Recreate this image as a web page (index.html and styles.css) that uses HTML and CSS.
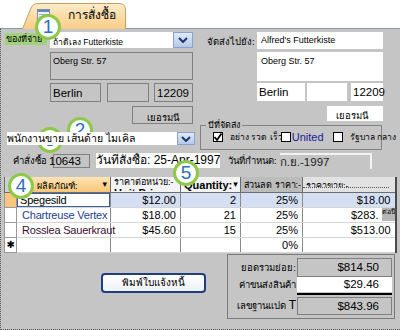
FILE: index.html
```html
<!DOCTYPE html>
<html lang="th">
<head>
    <meta charset="UTF-8">
    <meta name="viewport" content="width=device-width, initial-scale=1.0">
    <title>การสั่งซื้อ</title>
    <link rel="stylesheet" href="styles.css">
</head>
<body>

<div class="page">
    <div class="tabbar">
        <div class="tab">
            <svg class="tab-bg" width="104" height="26" viewBox="0 0 104 26">
                <defs>
                    <linearGradient id="tabfill" x1="0" y1="0" x2="0" y2="1">
                        <stop offset="0" stop-color="#fdecca"/>
                        <stop offset="1" stop-color="#f9cd85"/>
                    </linearGradient>
                </defs>
                <path d="M0.5 26 L9 5 Q11 0.5 16 0.5 L97 0.5 Q103.5 0.5 103.5 7 L103.5 26" fill="url(#tabfill)" stroke="#c99d5e"/>
            </svg>
            <svg class="tab-icon" width="13" height="12" viewBox="0 0 13 12">
                <rect x="0.5" y="0.5" width="12" height="11" fill="#eef2f8" stroke="#7d8fa8"/>
                <rect x="1" y="1" width="11" height="2" fill="#5b86c4"/>
                <path d="M2 5.5 H11 M2 8 H11" stroke="#9aaac0"/>
            </svg>
            <span class="tab-title">การสั่งซื้อ</span>
        </div>
    </div>

    <div class="form">
        <div class="top">
            <!-- bill to -->
            <div class="bill">
                <div class="line">
                    <span class="lbl"><span class="lbl-hot">ของที่จ่าย</span></span>
                    <div class="combo">
                        <span class="combo-text">ถ้าดิเลง Futterkiste</span>
                        <span class="drop">
                            <svg width="10" height="6" viewBox="0 0 10 6"><path d="M1 1 L5 5 L9 1" fill="none" stroke="#1d3566" stroke-width="2"/></svg>
                        </span>
                    </div>
                </div>
                <div class="box addr">Oberg Str. 57</div>
                <div class="city">
                    <div class="box big city-name">Berlin</div>
                    <div class="box city-region"></div>
                    <div class="box big city-zip">12209</div>
                </div>
                <div class="box country">เยอรมนี</div>
                <div class="combo employee">
                    <span class="combo-text emp">พนักงานขาย เส้นด้าย ไมเคิล</span>
                    <span class="drop">
                        <svg width="10" height="6" viewBox="0 0 10 6"><path d="M1 1 L5 5 L9 1" fill="none" stroke="#1d3566" stroke-width="2"/></svg>
                    </span>
                </div>
            </div>

            <!-- ship to -->
            <div class="ship">
                <div class="line ship-line">
                    <span class="lbl ship-lbl">จัดส่งไปยัง:</span>
                    <div class="wbox ship-name">Alfred's Futterkiste</div>
                </div>
                <div class="wbox ship-addr">Oberg Str. 57</div>
                <div class="ship-city">
                    <div class="wbox big sc-name">Berlin</div>
                    <div class="wbox sc-region"></div>
                    <div class="wbox big sc-zip">12209</div>
                </div>
                <div class="wbox ship-country">เยอรมนี</div>
                <div class="shipvia">
                    <span class="shipvia-title">บีที่จัดส่ง</span>
                    <div class="opts">
                        <span class="check on">
                            <svg width="10" height="10" viewBox="0 0 10 10"><path d="M1.5 5 L4 8 L8.5 1.5" fill="none" stroke="#000" stroke-width="1.8"/></svg>
                        </span>
                        <span class="opt-text">อย่าง รวด เร็ว</span>
                        <span class="check mid"></span>
                        <span class="opt-united">United</span>
                        <span class="check"></span>
                        <span class="opt-text">รัฐบาล กลาง</span>
                    </div>
                </div>
            </div>
        </div>

        <div class="orderrow">
            <span class="ord-lbl">คำสั่งซื้อ</span>
            <span class="box ord-no">10643</span>
            <span class="order-date">วันที่สั่งซื้อ: 25-Apr-1997</span>
            <span class="req-lbl">วันที่กำหนด:</span>
            <span class="req-val">ก.ย.-1997</span>
        </div>

        <table class="grid">
            <colgroup>
                <col class="c-sel"><col class="c-prod"><col class="c-unit"><col class="c-qty"><col class="c-disc"><col class="c-ext">
            </colgroup>
            <thead>
                <tr>
                    <th class="h-sel"></th>
                    <th class="h-prod"><div class="hc">ผลิตภัณฑ์:<span class="arrow">▾</span></div></th>
                    <th class="h-unit"><div class="hc"><span class="h-th">ราคาต่อหน่วย:-</span><span class="h-en">Unit Price</span></div></th>
                    <th class="h-qty"><div class="hc">Quantity:<span class="arrow">▾</span></div></th>
                    <th class="h-disc"><div class="hc">ส่วนลด ราคา:-</div></th>
                    <th class="h-ext"><div class="hc">ราคาขาย:-</div></th>
                </tr>
            </thead>
            <tbody>
                <tr class="current">
                    <td class="sel"></td>
                    <td class="focus">Spegesild</td>
                    <td class="num">$12.00</td>
                    <td class="num">2</td>
                    <td class="num">25%</td>
                    <td class="num">$18.00</td>
                </tr>
                <tr>
                    <td class="sel"></td>
                    <td class="prod prod-blue">Chartreuse Vertex</td>
                    <td class="num">$18.00</td>
                    <td class="num">21</td>
                    <td class="num">25%</td>
                    <td class="num ext-tip">$283.<span class="tip">ต่อนี้</span></td>
                </tr>
                <tr>
                    <td class="sel"></td>
                    <td class="prod prod-dark">Rosslea Sauerkraut</td>
                    <td class="num">$45.60</td>
                    <td class="num">15</td>
                    <td class="num">25%</td>
                    <td class="num">$513.00</td>
                </tr>
                <tr>
                    <td class="sel new">✱</td>
                    <td></td>
                    <td></td>
                    <td></td>
                    <td class="num">0%</td>
                    <td></td>
                </tr>
            </tbody>
        </table>

        <div class="bottom">
            <button class="print">พิมพ์ใบแจ้งหนี้</button>
            <div class="totals">
                <span class="t-lbl">ยอดรวมย่อย:</span>
                <span class="t-val">$814.50</span>
                <span class="t-lbl">ค่าขนส่งสินค้า</span>
                <span class="t-val t-white">$29.46</span>
                <span class="t-rule"></span>
                <span class="t-lbl">เลขฐานแปด <b class="t-mark">T</b></span>
                <span class="t-val">$843.96</span>
            </div>
        </div>
    </div>

    <div class="callout c1">1</div>
    <div class="callout c2">2</div>
    <div class="callout c3">3</div>
    <div class="callout c4">4</div>
    <div class="callout c5">5</div>
</div>

</body>
</html>
```

FILE: styles.css
```css
* {
    box-sizing: border-box;
}
body {
    margin: 0;
    background: #fff;
    font-family: "Liberation Sans", "Noto Sans", "DejaVu Sans", sans-serif;
    color: #000;
}
.page {
    position: relative;
    width: 400px;
    height: 330px;
    overflow: hidden;
}

/* tab strip */
.tabbar {
    height: 28px;
    display: flex;
    align-items: flex-end;
    padding-left: 22px;
}
.tab {
    position: relative;
    z-index: 1;
    width: 104px;
    height: 26px;
    margin-bottom: -1px;
    display: flex;
    align-items: center;
    gap: 18px;
    padding: 0 0 3px 15px;
}
.tab-bg {
    position: absolute;
    left: 0;
    top: 0;
}
.tab-icon,
.tab-title {
    position: relative;
}
.tab-title {
    font-size: 12px;
}

/* form body */
.form {
    height: 302px;
    background: #c5c5c5;
    border-top: 1px solid #8d99a7;
    border-left: 1px dotted #555;
    border-bottom: 1px dotted #555;
    padding: 3px 0 0 4px;
}
.top {
    display: flex;
}
.box {
    border: 1px solid #7f7f7f;
    font-size: 9px;
}
.wbox {
    background: #fff;
    font-size: 9px;
}
.big {
    font-size: 11.5px;
    display: flex;
    align-items: center;
    padding-left: 2px;
}
.line {
    display: flex;
    height: 16px;
}
.lbl {
    width: 45px;
    flex: none;
    font-size: 9px;
    white-space: nowrap;
}
.lbl-hot {
    display: block;
    width: 42px;
    height: 12px;
    margin-top: 1px;
    padding-left: 1px;
    background: #a3d07a;
    line-height: 12px;
    overflow: hidden;
}

/* combos */
.combo {
    position: relative;
    z-index: 1;
    display: flex;
    flex: 1;
    background: #fff;
    margin-right: 2px;
}
.combo-text {
    flex: 1;
    font-size: 8.5px;
    padding: 3px 0 0 3px;
    white-space: nowrap;
    overflow: hidden;
}
.drop {
    width: 20px;
    display: flex;
    align-items: center;
    justify-content: center;
    background: linear-gradient(#dfe9f7, #b5c9e8);
    border: 1px solid #87a3cd;
}

/* bill to column */
.bill {
    width: 190px;
    flex: none;
    display: flex;
    flex-direction: column;
}
.addr {
    height: 28px;
    margin: 4px 2px 0 45px;
    padding: 3px 2px;
}
.city {
    display: flex;
    height: 19px;
    margin: 3px 2px 0 45px;
}
.city-name {
    width: 51px;
}
.city-region {
    width: 42px;
    margin-left: 6px;
}
.city-zip {
    width: 39px;
    margin-left: 5px;
}
.country {
    width: 61px;
    height: 18px;
    margin: 4px 0 0 127px;
    font-size: 9.5px;
    padding: 3px 0 0 14px;
}
.employee {
    flex: none;
    height: 13px;
    margin: 8px 0 0 2px;
}
.combo-text.emp {
    font-size: 10.5px;
    padding: 0;
    line-height: 13px;
}
.employee .drop {
    width: 18px;
}

/* ship to column */
.ship {
    width: 183px;
    flex: none;
    margin-left: 5px;
    display: flex;
    flex-direction: column;
}
.ship-line {
    height: 17px;
}
.ship-lbl {
    width: 57px;
    padding: 2px 0 0 7px;
    font-size: 9.5px;
}
.ship-name {
    flex: 1;
    padding: 3px 4px;
}
.ship-addr {
    height: 29px;
    margin: 3px 0 0 57px;
    padding: 4px 4px;
}
.ship-city {
    display: flex;
    height: 18px;
    margin: 2px 0 0 57px;
}
.sc-name {
    width: 48px;
}
.sc-region {
    width: 40px;
    margin-left: 2px;
}
.sc-zip {
    width: 32px;
    margin-left: 4px;
}
.ship-country {
    width: 56px;
    height: 15px;
    margin: 5px 0 0 127px;
    font-size: 9.5px;
    padding: 2px 0 0 9px;
}
.shipvia {
    height: 25px;
    margin: 4px 1px 0 0;
    border: 1px solid #828282;
}
.shipvia-title {
    display: block;
    width: fit-content;
    margin: -6px 0 0 5px;
    padding: 0 2px;
    background: #c5c5c5;
    font-size: 9px;
    line-height: 10px;
}
.opts {
    display: flex;
    align-items: center;
    margin: 0 0 0 12px;
    white-space: nowrap;
}
.check {
    position: relative;
    width: 10px;
    height: 10px;
    flex: none;
    background: #fff;
    border: 1px solid #000;
    display: flex;
}
.check svg {
    margin: -1px;
}
.check.mid {
    margin-left: -2px;
}
.opt-text {
    font-size: 8.5px;
    margin-left: 7px;
}
.opt-united {
    font-size: 11px;
    color: #1a1a96;
    margin: 0 9px 0 1px;
}

/* order number / dates */
.orderrow {
    position: relative;
    z-index: 1;
    display: flex;
    align-items: center;
    height: 15px;
    margin-top: 3px;
    white-space: nowrap;
}
.ord-lbl {
    width: 48px;
    padding-left: 8px;
    font-size: 9.5px;
}
.ord-no {
    width: 37px;
    height: 14px;
    font-size: 11.5px;
    text-indent: -5px;
    line-height: 12px;
}
.order-date {
    width: 124px;
    height: 15px;
    margin-left: 6px;
    background: #fff;
    font-size: 12px;
    line-height: 15px;
    overflow: hidden;
}
.req-lbl {
    margin-left: 8px;
    font-size: 9.5px;
}
.req-val {
    margin-left: 3px;
    width: 92px;
    height: 16px;
    font-size: 11.5px;
    color: #222;
    line-height: 14px;
    border-top: 2px solid #f2f2f2;
    border-right: 2px solid #f2f2f2;
}

/* datasheet */
.grid {
    margin: 9px 0 0 -1px;
    width: 391px;
    table-layout: fixed;
    border-collapse: collapse;
    background: #fff;
    border-right: 2px solid #4a4a4a;
    font-size: 11px;
}
.c-sel { width: 12px; }
.c-prod { width: 94px; }
.c-unit { width: 70px; }
.c-qty { width: 60px; }
.c-disc { width: 62px; }
.c-ext { width: 93px; }
.grid th {
    padding: 0;
    height: 15px;
    font-weight: normal;
    text-align: left;
    border-left: 1px solid #6d6d6d;
    border-bottom: 1px solid #6d6d6d;
    background: #f3f3f3;
    vertical-align: top;
}
.hc {
    height: 14px;
    overflow: hidden;
    white-space: nowrap;
    display: flex;
    font-size: 9px;
    padding: 1px 3px 0;
}
.h-sel {
    background: #cfcfcf !important;
}
.grid .h-prod {
    background: linear-gradient(#fde3b6, #f7c677);
}
.h-prod .hc {
    padding-left: 20px;
    padding-top: 2px;
}
.arrow {
    margin-left: auto;
    font-size: 9px;
}
.h-unit .hc {
    flex-direction: column;
    line-height: 9px;
}
.h-en {
    font-size: 11px;
    font-weight: bold;
    line-height: 12px;
}
.h-qty .hc {
    font-size: 11px;
    font-weight: bold;
    padding-top: 2px;
}
.h-qty .arrow {
    margin-left: 1px;
}
.grid .h-disc {
    background: #bcbcbc;
}
.grid .h-ext {
    background: #e2e2e2;
}
.h-ext .hc {
    padding-top: 2px;
    border-bottom: 1px dotted #555;
    height: 11px;
    margin-right: 6px;
}
.grid td {
    height: 15px;
    padding: 0 4px 0 3px;
    line-height: 14px;
    white-space: nowrap;
    overflow: hidden;
    border-left: 1px solid #8a8a8a;
    border-bottom: 1px solid #d6d6d6;
    letter-spacing: -0.2px;
}
.grid td.prod {
    overflow: visible;
    padding-left: 5px;
}
.grid td.num {
    text-align: right;
    letter-spacing: 0;
}
.grid td.sel {
    border: 1px solid #9a9a9a;
    padding: 0;
    background: #fff;
}
.grid .current td {
    background: #d4dff3;
}
.grid .current td.sel {
    background: #f8c67c;
}
.grid .current td.focus {
    background: #fff;
    box-shadow: inset 0 0 0 1px #3c5f9e;
}
.prod-blue {
    color: #1d3e8e;
}
.prod-dark {
    color: #3a0f30;
}
.grid td.new {
    font-family: "DejaVu Sans", sans-serif;
    font-size: 10px;
    text-align: center;
}
.grid td.ext-tip {
    padding-right: 0;
}
.tip {
    display: inline-block;
    vertical-align: top;
    width: 13px;
    height: 13px;
    margin-left: 3px;
    background: #b6b6b6;
    font-size: 7px;
    line-height: 8px;
    overflow: hidden;
    text-align: left;
}

/* footer */
.bottom {
    display: flex;
    margin-top: 1px;
}
.print {
    width: 105px;
    height: 20px;
    margin: 19px 0 0 96px;
    padding: 0;
    background: linear-gradient(#ffffff, #eef1f6);
    border: 2px solid #1f3f7c;
    border-radius: 4px;
    font-family: inherit;
    font-size: 10px;
    color: #000;
}
.totals {
    width: 168px;
    height: 65px;
    margin: 0 5px 0 auto;
    border: 1px solid #7a7a7a;
    display: grid;
    grid-template-columns: 69px 95px;
    grid-template-rows: 19px 15px 5px 18px;
    align-items: center;
    padding-top: 3px;
}
.t-lbl {
    font-size: 9.5px;
    text-align: right;
    white-space: nowrap;
    padding-right: 1px;
}
.t-val {
    height: 100%;
    border: 1px solid #7f7f7f;
    font-size: 11.5px;
    text-align: right;
    padding-right: 12px;
    display: flex;
    align-items: center;
    justify-content: flex-end;
}
.t-white {
    border: none;
    background: #fff;
    padding-right: 13px;
}
.t-rule {
    grid-column: 2;
    height: 2px;
    background: #000;
    align-self: center;
}
.t-mark {
    font-weight: normal;
    font-size: 12px;
}

/* numbered callouts */
.callout {
    position: absolute;
    z-index: 3;
    width: 26px;
    height: 26px;
    border: 3px solid #8dc84a;
    border-radius: 50%;
    background: #fff;
    color: #2d6fbf;
    font-size: 19px;
    line-height: 20px;
    text-align: center;
}
.c1 { left: 35px; top: 14px; }
.c2 { left: 67px; top: 117px; z-index: 0; }
.c3 { left: 37px; top: 127px; z-index: 0; }
.c4 { left: 8px; top: 173px; }
.c5 { left: 173px; top: 160px; }
```
